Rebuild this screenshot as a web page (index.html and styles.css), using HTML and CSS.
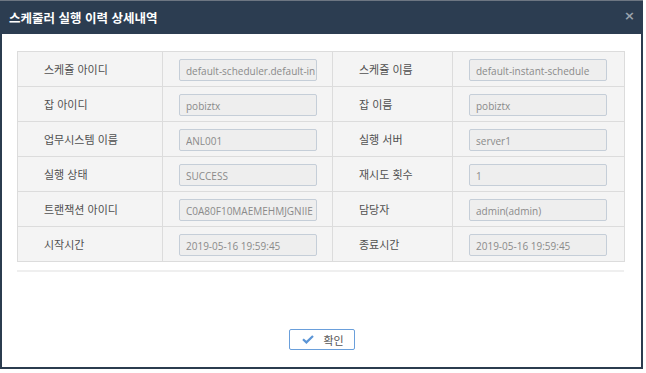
FILE: index.html
```html
<!DOCTYPE html>
<html lang="ko">
<head>
<meta charset="utf-8">
<title>스케줄러 실행 이력 상세내역</title>
<link rel="stylesheet" href="styles.css">
</head>
<body>
<div class="dialog">
  <div class="dlg-header">
    <span class="dlg-title">스케줄러 실행 이력 상세내역</span>
    <span class="dlg-close">×</span>
  </div>
  <div class="dlg-body">
    <table class="detail">
      <colgroup>
        <col class="c1"><col class="c2"><col class="c3"><col class="c4">
      </colgroup>
      <tr>
        <th>스케쥴 아이디</th><td><input class="field" readonly value="default-scheduler.default-instant-schedule"></td>
        <th>스케쥴 이름</th><td><input class="field" readonly value="default-instant-schedule"></td>
      </tr>
      <tr>
        <th>잡 아이디</th><td><input class="field" readonly value="pobiztx"></td>
        <th>잡 이름</th><td><input class="field" readonly value="pobiztx"></td>
      </tr>
      <tr>
        <th>업무시스템 이름</th><td><input class="field" readonly value="ANL001"></td>
        <th>실행 서버</th><td><input class="field" readonly value="server1"></td>
      </tr>
      <tr>
        <th>실행 상태</th><td><input class="field" readonly value="SUCCESS"></td>
        <th>재시도 횟수</th><td><input class="field" readonly value="1"></td>
      </tr>
      <tr>
        <th>트랜잭션 아이디</th><td><input class="field" readonly value="C0A80F10MAEMEHMJGNIIE"></td>
        <th>담당자</th><td><input class="field" readonly value="admin(admin)"></td>
      </tr>
      <tr>
        <th>시작시간</th><td><input class="field" readonly value="2019-05-16 19:59:45"></td>
        <th>종료시간</th><td><input class="field" readonly value="2019-05-16 19:59:45"></td>
      </tr>
    </table>
    <div class="sep"></div>
  </div>
  <div class="dlg-footer">
    <button class="btn-ok" type="button">
      <svg class="check" width="12" height="9" viewBox="0 0 12 9"><path d="M1 4.2 L4.4 7.4 L11 1" fill="none" stroke="#5b95d6" stroke-width="2.2"/></svg>
      <span>확인</span>
    </button>
  </div>
</div>
</body>
</html>
```

FILE: styles.css
```css
html, body {
  margin: 0;
  padding: 0;
  background: #ffffff;
}
body {
  font-family: "Noto Sans CJK KR", "Open Sans", sans-serif;
}
.dialog {
  width: 643px;
  height: 369px;
  box-sizing: border-box;
  border: 2px solid #2b3c4f;
  border-top: 0;
  background: #ffffff;
  display: flex;
  flex-direction: column;
}
.dlg-header {
  height: 34px;
  box-sizing: border-box;
  border-top: 1px solid #6d7682;
  background: #2c3d51;
  display: flex;
  align-items: center;
  justify-content: space-between;
  margin: 0 -2px 0 -2px;
  padding-left: 9px;
  padding-right: 8px;
}
.dlg-title {
  color: #ffffff;
  font-size: 12.5px;
  font-weight: bold;
}
.dlg-close {
  color: #9aa3ad;
  font-family: "DejaVu Sans", sans-serif;
  font-size: 13px;
  font-weight: bold;
  line-height: 1;
  margin-top: -4px;
}
.dlg-body {
  padding: 17px 17px 0 15px;
}
.detail {
  width: 607px;
  border-collapse: collapse;
  table-layout: fixed;
  background: #f4f4f4;
}
.detail col.c1 { width: 145px; }
.detail col.c2 { width: 170px; }
.detail col.c3 { width: 120px; }
.detail col.c4 { width: 172px; }
.detail th, .detail td {
  border: 1px solid #dcdcdc;
  height: 35px;
  padding: 0;
  box-sizing: border-box;
}
.detail th {
  text-align: left;
  font-weight: normal;
  font-size: 11px;
  color: #505050;
  padding-left: 26px;
}
.detail td {
  padding-left: 16px;
}
.field {
  display: block;
  width: 138px;
  height: 22px;
  box-sizing: border-box;
  border: 1px solid #c5ced8;
  border-radius: 2px;
  background: #eeeeee;
  color: #8a8a8a;
  font-family: "Open Sans", "Noto Sans CJK KR", sans-serif;
  font-size: 10px;
  padding: 2px 1px 0 6px;
  margin: 1px 0 0 0;
  outline: none;
}
.sep {
  height: 2px;
  background: #efefef;
  margin-top: 8px;
  width: 607px;
}
.dlg-footer {
  flex: 1;
  display: flex;
  justify-content: center;
  align-items: flex-start;
  padding-top: 57px;
}
.btn-ok {
  width: 66px;
  height: 21px;
  box-sizing: border-box;
  border: 1px solid #6a9fdb;
  border-radius: 2px;
  background: #ffffff;
  display: flex;
  align-items: center;
  justify-content: center;
  gap: 9px;
  padding: 0 0 0 2px;
  font-family: "Noto Sans CJK KR", sans-serif;
  font-size: 11px;
  color: #555555;
  margin-left: 1px;
}
.check {
  display: block;
}
```
